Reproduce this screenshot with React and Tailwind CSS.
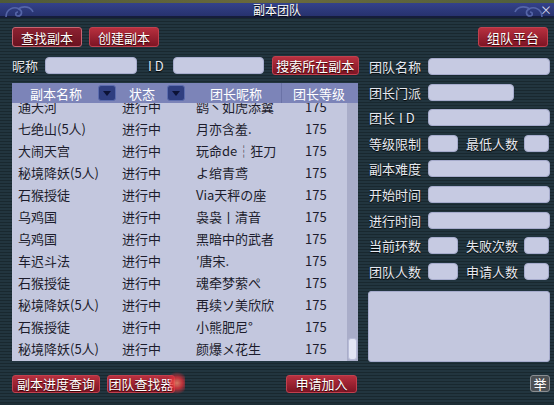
import clsx from 'clsx';

const ROWS = [
  ['通天河', '鹞丶如虎添翼'],
  ['七绝山(5人)', '月亦含羞.'],
  ['大闹天宫', '玩命de┆狂刀'],
  ['秘境降妖(5人)', 'よ绾青鸢'],
  ['石猴授徒', 'Via天秤の座'],
  ['乌鸡国', '袅袅丨清音'],
  ['乌鸡国', '黑暗中的武者'],
  ['车迟斗法', '′唐宋.'],
  ['石猴授徒', '魂牵梦萦ぺ'],
  ['秘境降妖(5人)', '再续ソ美欣欣'],
  ['石猴授徒', '小熊肥尼°'],
  ['秘境降妖(5人)', '颜爆メ花生'],
];

function RedButton({ children, className = '', active = false }) {
  return (
    <button
      className={clsx(
        'flex shrink-0 items-center justify-center whitespace-nowrap rounded-[3px] border text-[13px] leading-none text-white [text-shadow:0_1px_1px_#300]',
        active
          ? 'border-[#c86470] bg-linear-to-b from-[#8e2232] to-[#6a1220]'
          : 'border-[#c0404e] bg-linear-to-b from-[#b8303f] to-[#7e1424]',
        className
      )}
    >
      {children}
    </button>
  );
}

function Field({ className = '' }) {
  return <div className={clsx('h-[17px] shrink-0 rounded-[4px] border border-[#a6abcc] bg-[#c6cae2]', className)} />;
}

function Label({ children, className = '' }) {
  return (
    <span className={clsx('shrink-0 whitespace-nowrap text-[13px] leading-none text-[#e6e9f0] [text-shadow:0_1px_1px_#000]', className)}>
      {children}
    </span>
  );
}

function Drop() {
  return (
    <div className="flex h-[16px] w-[18px] items-center justify-center rounded-[3px] border border-[#5c6cae] bg-[#2f3e80]">
      <div className="h-0 w-0 border-x-[4px] border-t-[5px] border-x-transparent border-t-[#0c1236]" />
    </div>
  );
}

function Swirl({ className = '' }) {
  return (
    <svg className={className} width="30" height="16" viewBox="0 0 30 16" fill="none" stroke="#5565a8" strokeWidth="1.6">
      <path d="M2 14 C2 6 10 3 15 6 C19 8 18 13 14 13 C11 13 11 9 14 9" />
      <path d="M14 6 C20 2 27 4 29 9" />
    </svg>
  );
}

export default function App() {
  return (
    <div className="relative h-[405px] w-[554px] overflow-hidden bg-[#1d2e36] font-['Noto_Sans_CJK_SC',sans-serif]">
      {/* title bar */}
      <div className="h-[3px] bg-linear-to-r from-[#4f5a38] via-[#6b6a3c] to-[#4e5e3c]" />
      <div className="relative flex h-[15px] items-center justify-center border-b-2 border-[#151d3a] bg-linear-to-b from-[#34428a] to-[#27326e]">
        <Swirl className="absolute left-[4px] top-[0px]" />
        <Swirl className="absolute right-[10px] top-[0px] -scale-x-100" />
        <span className="text-[12px] leading-none text-white [text-shadow:0_1px_1px_#000]">副本团队</span>
        <span className="absolute right-[2px] top-[1px] text-[12px] leading-none text-[#d8dcf0]">×</span>
      </div>

      {/* body */}
      <div className="h-[385px] bg-[repeating-linear-gradient(to_bottom,#19282f_0px,#19282f_1px,#22353f_1px,#22353f_3px)] px-[12px] pt-[9px]">
        <div className="flex h-[20px] gap-[7px]">
          <RedButton active className="w-[70px]">查找副本</RedButton>
          <RedButton className="w-[70px]">创建副本</RedButton>
          <RedButton className="ml-auto mr-[-6px] w-[70px]">组队平台</RedButton>
        </div>

        <div className="mt-[9px] flex gap-[10px]">
          {/* left column */}
          <div className="flex w-[346px] shrink-0 flex-col gap-[8px]">
            <div className="flex h-[19px] items-center">
              <Label>昵称</Label>
              <Field className="ml-[7px] w-[92px]" />
              <Label className="ml-[11px] tracking-[3px]">ID</Label>
              <Field className="ml-[6px] w-[91px]" />
              <RedButton className="ml-[8px] h-[19px] w-[87px]">搜索所在副本</RedButton>
            </div>

            <div className="flex h-[278px] flex-col overflow-hidden bg-[#c3c7de]">
              <div className="flex h-[20px] shrink-0 items-center bg-[#7c84b8] pl-[18px] text-[13px] leading-none text-white">
                <span>副本名称</span>
                <div className="ml-[16px]"><Drop /></div>
                <span className="ml-[13px]">状态</span>
                <div className="ml-[12px]"><Drop /></div>
                <span className="ml-[25px]">团长昵称</span>
                <div className="ml-[19px] h-[20px] w-px bg-[#6a72a6]" />
                <span className="ml-[11px]">团长等级</span>
              </div>
              <div className="flex min-h-0 flex-1 overflow-hidden">
                <div className="mt-[-8px] flex-1 text-[13px] leading-none text-[#1c1c2c]">
                  {ROWS.map(([name, leader], i) => (
                    <div key={i} className="flex h-[22px] items-center whitespace-nowrap">
                      <span className="ml-[6px] w-[104px]">{name}</span>
                      <span className="w-[74px]">进行中</span>
                      <span className="w-[109px]">{leader}</span>
                      <span>175</span>
                    </div>
                  ))}
                </div>
                <div className="flex w-[11px] flex-col justify-end bg-[#a9adc9] px-[1px] pb-[1px]">
                  <div className="h-[22px] rounded-[3px] border border-[#b8bcd8] bg-[#e2e5f4]" />
                </div>
              </div>
            </div>
          </div>

          {/* right column */}
          <div className="flex w-[182px] shrink-0 flex-col gap-[8.6px] pt-[2px]">
            <div className="flex h-[17px] items-center gap-[7px] pl-[1px]">
              <Label className="w-[52px]">团队名称</Label>
              <Field className="flex-1" />
            </div>
            <div className="flex h-[17px] items-center gap-[7px] pl-[1px]">
              <Label className="w-[52px]">团长门派</Label>
              <Field className="w-[86px]" />
            </div>
            <div className="flex h-[17px] items-center gap-[7px] pl-[1px]">
              <Label className="w-[52px]">团长<span className="ml-[4px] tracking-[3px]">ID</span></Label>
              <Field className="flex-1" />
            </div>
            <div className="flex h-[17px] items-center pl-[1px]">
              <Label className="w-[52px]">等级限制</Label>
              <Field className="ml-[7px] w-[30px]" />
              <Label className="ml-[8px]">最低人数</Label>
              <Field className="ml-[6px] w-[25px]" />
            </div>
            <div className="flex h-[17px] items-center gap-[7px] pl-[1px]">
              <Label className="w-[52px]">副本难度</Label>
              <Field className="flex-1" />
            </div>
            <div className="flex h-[17px] items-center gap-[7px] pl-[1px]">
              <Label className="w-[52px]">开始时间</Label>
              <Field className="flex-1" />
            </div>
            <div className="flex h-[17px] items-center gap-[7px] pl-[1px]">
              <Label className="w-[52px]">进行时间</Label>
              <Field className="flex-1" />
            </div>
            <div className="flex h-[17px] items-center pl-[1px]">
              <Label className="w-[52px]">当前环数</Label>
              <Field className="ml-[7px] w-[30px]" />
              <Label className="ml-[8px]">失败次数</Label>
              <Field className="ml-[6px] w-[25px]" />
            </div>
            <div className="flex h-[17px] items-center pl-[1px]">
              <Label className="w-[52px]">团队人数</Label>
              <Field className="ml-[7px] w-[30px]" />
              <Label className="ml-[8px]">申请人数</Label>
              <Field className="ml-[6px] w-[25px]" />
            </div>
            <div className="mt-[2.6px] h-[71px] rounded-[3px] border border-[#a6abcc] bg-[#c3c7de]" />
          </div>
        </div>

        {/* bottom row */}
        <div className="mt-[13px] flex h-[18px] items-center">
          <RedButton className="h-[18px] w-[88px]">副本进度查询</RedButton>
          <div className="relative ml-[7px]">
            <RedButton className="h-[18px] w-[68px]">团队查找器</RedButton>
            <div className="absolute right-[-10px] top-[-6px] h-[28px] w-[16px] rounded-full bg-[radial-gradient(circle,#ff8a6a_0%,#e0303a_35%,transparent_70%)] opacity-80" />
          </div>
          <RedButton className="ml-[111px] h-[18px] w-[71px]">申请加入</RedButton>
          <div className="ml-auto mr-[-8px] flex h-[17px] w-[20px] items-center justify-center rounded-[3px] border border-[#8a8e92] bg-[#4c5054] text-[13px] leading-none text-white">
            举
          </div>
        </div>
      </div>
    </div>
  );
}
